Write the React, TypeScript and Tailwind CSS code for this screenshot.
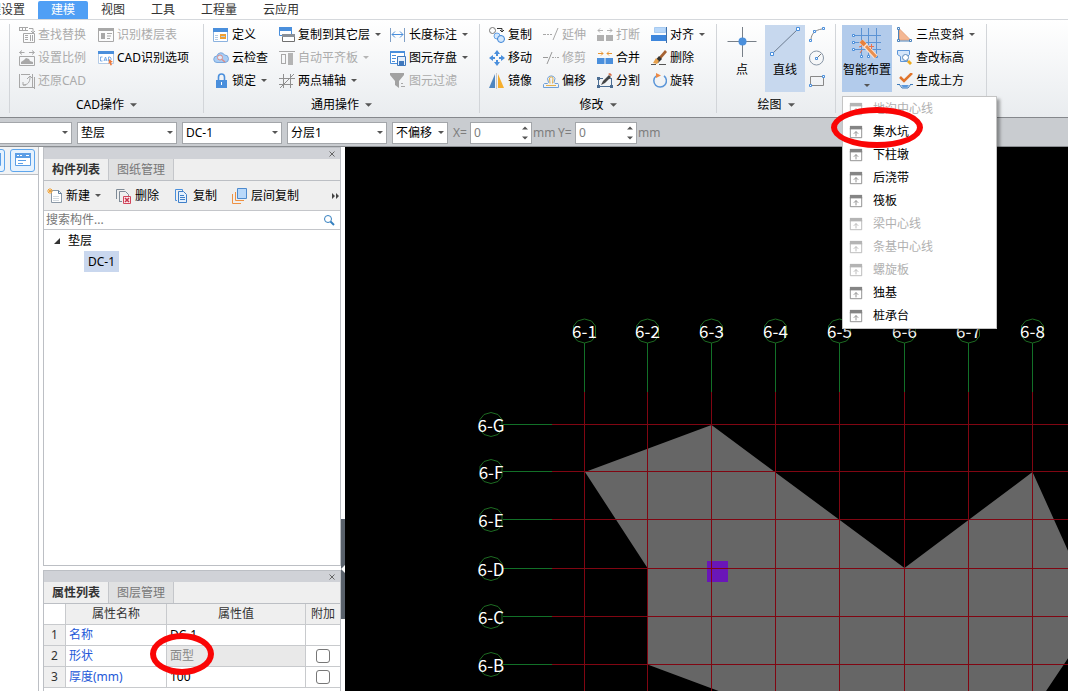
import clsx from 'clsx'
import React from 'react'

interface ChildrenProps {
  children?: React.ReactNode
  className?: string
}

function Svg({ children, className }: ChildrenProps) {
  return (
    <svg viewBox="0 0 16 16" fill="none" className={clsx('size-4 shrink-0', className)} aria-hidden>
      {children}
    </svg>
  )
}

const BLUE = '#4a8fdc'
const GRAY = '#a8a8a8'
const ORANGE = '#f0a030'

const icons = {
  findReplace: (
    <Svg>
      <path d="M0 .5h9M0 3.5h9M.5 0v4M3.5 0v4M6.5 0v4M10 1.5h4v4M12 4l2 2 2-2" stroke={GRAY} />
      <path d="M4.500 6.500h11v9h-11zM6 8.500h3M6 10.500h3M6 12.500h3M11.500 8v6M13.500 8v6" stroke={GRAY} />
    </Svg>
  ),
  floorTable: (
    <Svg>
      <path d="M.5 1.500h15v13H.5z" stroke={GRAY} />
      <path d="M0 1h16v3H0zM3 6h4v6H3z" fill={GRAY} />
      <path d="M9 6.500h5M9 9h4M9 11.500h3" stroke={GRAY} />
    </Svg>
  ),
  scale: (
    <Svg>
      <path d="M.5 2.500h5M3 .5l-2.500 2 2.500 2M10 2.500h5M13 .5l2.500 2-2.500 2M.5 6.500h15v9H.5z" stroke={GRAY} />
      <path d="M2 14v-2l3-2 2-2 3 1 1 2 3 1v2z" fill={GRAY} />
    </Svg>
  ),
  cadOptions: (
    <Svg>
      <path d="M.5 1.500h15v12H.5z" fill="#fff" stroke="#b4cbe6" />
      <path d="M0 1h16v3H0z" fill={BLUE} />
      <path d="M4.500 7H2.500v4h2M6 11l1.500-4L9 11M6.500 10h2M10.500 7v4h1.500l1-1V8l-1-1z" stroke="#5d9be2" strokeWidth=".8" />
      <path d="M11 9l4 3-2 .5 1 2.500-1.500.5-1-2.500-1 1z" fill="#ee7a3c" />
    </Svg>
  ),
  restore: (
    <Svg>
      <path d="M.5 1v14M0 14.500h16M15.500 4v12M2 1.500h9M13.500 1v13" stroke={GRAY} />
      <path d="M4 9v3h3M4 12c5 0 7-3 7-8M8 6l3-3 3 3" stroke={GRAY} />
    </Svg>
  ),
  define: (
    <Svg>
      <path d="M.5 1.500h14v13H.5z" fill="#fff" stroke="#8bb2df" />
      <path d="M0 1h15v4H0z" fill={BLUE} />
      <path d="M7 7h6v5H7z" fill={ORANGE} />
      <path d="M2 8.500h3M2 10.500h3M2 12.500h3M8 9.500h4" stroke="#b5cbe4" />
    </Svg>
  ),
  cloud: (
    <Svg>
      <path d="M4 12.500a3.200 3.200 0 010-6.500 4 4 0 017.500-1 3.500 3.500 0 01.5 7.500z" fill="#a9cdf4" stroke="#7aa7dd" />
      <circle cx="7" cy="7.500" r="2.500" fill="#dcebfb" stroke="#dc8a86" />
      <path d="M9 9.500l3 2.500" stroke="#dc8a86" strokeWidth="1.500" />
    </Svg>
  ),
  lock: (
    <Svg>
      <path d="M5.500 8V4a3 3 0 016 0v4" stroke={BLUE} strokeWidth="1.600" />
      <path d="M3 7h11v8H3z" fill={BLUE} />
      <path d="M8 9h1v3H8z" fill="#fff" />
    </Svg>
  ),
  copyFloors: (
    <Svg>
      <path d="M.5.5h12v8H.5z" fill="#fff" stroke={BLUE} />
      <path d="M0 0h13v4H0z" fill={BLUE} />
      <path d="M3.500 7.500h12v7h-12z" fill="#fff" stroke="#707070" />
      <path d="M3 7h13v3H3z" fill="#8a9097" />
    </Svg>
  ),
  alignSlab: (
    <Svg>
      <path d="M0 1.500h16M2.500 4v10M6.500 4v10M2 4.500h5M2 13.500h5" stroke={GRAY} />
      <path d="M9 3h5v12H9z" fill="#b4b4b4" />
    </Svg>
  ),
  twoPoint: (
    <Svg>
      <path d="M4.500 1v14M11.500 1v14M0 5.500h16M0 11.500h14M1 15L15 1" stroke="#909090" />
    </Svg>
  ),
  length: (
    <Svg>
      <path d="M.5 1v14M14.500 1v14" stroke="#7f9fc6" />
      <path d="M2 7.500h11M5 4.500l-3 3 3 3M10 4.500l3 3-3 3" stroke={BLUE} />
    </Svg>
  ),
  save: (
    <Svg>
      <path d="M.5 1.500h14v12H.5z" fill="#fff" stroke={BLUE} />
      <path d="M0 1h15v2H0z" fill={BLUE} />
      <path d="M2 5.500h4M2 8.500h4M2 11.500h3" stroke={BLUE} />
      <path d="M7.500 6.500h8v9h-8z" fill="#e6f0fc" stroke="#3f78bd" />
      <path d="M9 11h5v4H9z" fill="#3f78bd" />
    </Svg>
  ),
  filter: (
    <Svg>
      <path d="M0 0h14v2L9 8v7l-4-3V8L0 2z" fill="#a2a2a2" />
      <path d="M11 10.500h2M11 13.500h4" stroke={GRAY} />
    </Svg>
  ),
  copy: (
    <Svg>
      <circle cx="3.500" cy="3.500" r="3" stroke="#777" />
      <path d="M8 1.500h5v3M11 3l2 2 2-2" stroke="#333" />
      <circle cx="8" cy="9" r="3" stroke="#64a2e8" fill="#d3e7fc" />
      <circle cx="12" cy="12" r="3.500" stroke="#3b83d6" fill="#d3e7fc" />
    </Svg>
  ),
  move: (
    <Svg>
      <path d="M8 0l3 4H9v2H7V4H5zM8 16l3-4H9v-2H7v2H5zM0 8l4-3v2h2v2H4v2zM16 8l-4-3v2h-2v2h2v2z" fill={BLUE} />
    </Svg>
  ),
  mirror: (
    <Svg>
      <path d="M6 1v14H0z" fill="#4f86c0" />
      <path d="M9 1v14h6z" fill="#f6ae2d" />
      <path d="M7.500 0v16" stroke="#c8c8c8" />
    </Svg>
  ),
  extend: (
    <Svg>
      <path d="M0 7.500h3M4 7.500h2M7 7.500h2M10 13l5-12" stroke={GRAY} />
    </Svg>
  ),
  trim: (
    <Svg>
      <path d="M0 7.500h5M4 14L9 2" stroke="#999" />
      <path d="M9 7.500h2M12 7.500h1M14 7.500h2" stroke={GRAY} />
    </Svg>
  ),
  offset: (
    <Svg>
      <path d="M.5 14.500v-3l1-1h3l1-1-1-4a4 4 0 017.500 0l-1 4 1 1h3l.5 1v3z" stroke="#6e9fd6" />
      <path d="M3 12.500h10M7 10.500L6.500 5a2 2 0 013.500 0l-.5 5.500" stroke="#e5b04a" />
    </Svg>
  ),
  breakApart: (
    <Svg>
      <path d="M0 8h7v6H0zM9 8h7v6H9z" fill="#b0b0b0" />
      <path d="M1 3.500h5M3 1.500l-2 2 2 2M10 3.500h5M13 1.500l2 2-2 2" stroke="#b0b0b0" />
    </Svg>
  ),
  merge: (
    <Svg>
      <path d="M0 8h7.500v6H0zM8.500 8H16v6H8.500z" fill={BLUE} />
      <path d="M1 3.500h5M4 1.500l2 2-2 2M10 3.500h5M12 1.500l-2 2 2 2" stroke="#e79432" />
    </Svg>
  ),
  split: (
    <Svg>
      <path d="M1.500 5v8M1 5.500h5M10 5.500h5M14.500 5v8M1 13.500h14" stroke="#4b6d93" />
      <path d="M0 12h3v3H0zM13 12h3v3h-3zM0 4h3v3H0z" fill="#4b6d93" />
      <path d="M4 12l2-4 6-6 2 2-6 6z" fill="#444" />
      <path d="M11 1l2-1 2 2-1 1z" fill="#d56c45" />
    </Svg>
  ),
  align: (
    <Svg>
      <path d="M3.500.5h11v5h-11z" fill="#b7d7fa" stroke="#a7caf0" />
      <path d="M0 8h15v6H0z" fill="#3d86dc" />
      <path d="M15.500 0v16" stroke="#3f6fa8" />
    </Svg>
  ),
  erase: (
    <Svg>
      <path d="M14 0l2 2-6 7-2-2z" fill="#a56233" />
      <path d="M8 6l3 3-4 4-4-1z" fill="#333" />
      <path d="M5 8l3 3-2 3-4-1z" fill="#e8a24e" />
      <path d="M0 14.500h5M8 14.500h7" stroke="#555" />
    </Svg>
  ),
  rotate: (
    <Svg>
      <path d="M5 3a6.300 6.300 0 108-.2" stroke="#5a95d8" strokeWidth="1.500" />
      <path d="M5 0l5 2.500L5 5z" fill="#ec8a47" />
    </Svg>
  ),
  slope: (
    <Svg>
      <path d="M2.500 2v11h11z" fill="#f4b793" stroke="#e6a47c" />
      <path d="M1.500 2v12H14" stroke="#4a83bd" />
      <path d="M.5.5h2v2h-2zM.5 12.500h2v2h-2zM12.500 12.500h2v2h-2z" fill="#fff" stroke="#4a83bd" />
    </Svg>
  ),
  elevation: (
    <Svg>
      <path d="M.5.5h12v4l-2 2v5h-7v-5l-3-2z" fill="#d5e6fa" stroke="#5c95d8" />
      <circle cx="8.500" cy="7.500" r="3" fill="#fff" stroke="#5b88b8" />
      <path d="M12 10l3 3-2 2-3-3z" fill="#edaa1d" />
    </Svg>
  ),
  earthwork: (
    <Svg>
      <path d="M3 4l4 4 8-8" stroke="#e0742c" strokeWidth="2.500" />
      <path d="M0 11.500h3M13 11.500h3M2 11l3 4h6l3-4" stroke="#3e7ab8" />
      <path d="M4 12h8l-2 2.500H6z" fill="#5a98dc" />
    </Svg>
  ),
  arc: (
    <Svg>
      <path d="M2 13C2 7 6 3 13 2" stroke="#888" />
      <path d="M.5 12.500h2v2h-2zM13.500.5h2v2h-2zM4.500 3.500h2v2h-2z" fill="#fff" stroke={BLUE} />
    </Svg>
  ),
  circle: (
    <Svg>
      <circle cx="7.500" cy="8" r="7" stroke="#8795a5" />
      <path d="M8 8l4-4" stroke="#777" />
      <path d="M6.500 7.500h2v2h-2z" fill="#fff" stroke={BLUE} />
    </Svg>
  ),
  rect: (
    <Svg>
      <path d="M1.500 3.500h13v9h-13z" stroke="#888" />
      <path d="M.5 11.500h2v2h-2zM13.500 2.500h2v2h-2z" fill="#fff" stroke={BLUE} />
    </Svg>
  ),
  newItem: (
    <Svg>
      <path d="M4.500 2.500h7l3 3v9h-10z" fill="#fff" stroke="#8b98a6" />
      <path d="M11.500 2.500v3h3" stroke="#5d7f9f" />
      <path d="M6 8.500h6M6 10.500h6M6 12.500h6" stroke="#d3dae0" />
      <path d="M3 0v6M0 3h6M1 1l4 4M5 1L1 5" stroke="#f2a336" />
    </Svg>
  ),
  deleteItem: (
    <Svg>
      <path d="M.5 11V1.500h8M3.500 13.500v-10h6l3 3v2M3 13.500h3" stroke="#7f8b97" />
      <path d="M7.500 8.500h7v7h-7z" fill="#fbe9ec" stroke="#d2455b" />
      <path d="M9 10l4 4M13 10l-4 4" stroke="#c8324b" strokeWidth="1.500" />
    </Svg>
  ),
  copyItem: (
    <Svg>
      <path d="M3 12.500H1.500v-11h7V3" stroke="#4a8fdc" />
      <path d="M4.500 3.500h5l3 3v8h-8z" fill="#e4f0fd" stroke="#3f7fc8" />
      <path d="M6 7.500h4M6 9.500h5M6 11.500h5" stroke="#3f7fc8" />
    </Svg>
  ),
  layerCopy: (
    <Svg>
      <path d="M5.500.5h9v10h-9z" fill="#b8d8fa" stroke="#4d8ace" />
      <path d="M3.500 4v8.500H12M.5 6v9.500H9" stroke="#ee9143" />
    </Svg>
  ),
  place: (
    <Svg className="size-[14px]">
      <path d="M1.500 3.500h13v11h-13z" fill="#fff" stroke="currentColor" />
      <path d="M1 1h14v4H1z" fill="currentColor" />
      <path d="M8 13V7.500M5.500 10L8 7.500l2.500 2.500" stroke="currentColor" />
    </Svg>
  ),
}

type IconName = keyof typeof icons

function Caret({ big }: { big?: boolean }) {
  return (
    <svg viewBox="0 0 8 4" className={big ? 'h-1 w-[7px] shrink-0' : 'h-[3px] w-[6px] shrink-0'} aria-hidden>
      <path d="M0 0h8L4 4z" fill="currentColor" />
    </svg>
  )
}

interface ToolProps {
  icon: IconName
  label: string
  caret?: boolean
  disabled?: boolean
}

function Tool({ icon, label, caret, disabled }: ToolProps) {
  return (
    <button
      type="button"
      disabled={disabled}
      className={clsx('flex h-[23px] items-center gap-[3px] whitespace-nowrap', disabled ? 'text-[#ababab]' : 'text-black')}
    >
      {icons[icon]}
      {label}
      {caret && (
        <span className={clsx('pl-[2px]', disabled ? 'text-[#b5b5b5]' : 'text-[#555]')}>
          <Caret />
        </span>
      )}
    </button>
  )
}

function Group({ title, className, children }: ChildrenProps & { title?: string }) {
  return (
    <section className={clsx('relative flex shrink-0 flex-col pt-[3px]', className)}>
      <div className="h-[70px]">{children}</div>
      {title && (
        <button type="button" className="flex h-[23px] items-center justify-center gap-[6px] pr-px text-black">
          {title}
          <span className="text-[#555]">
            <Caret big />
          </span>
        </button>
      )}
      <span className="absolute inset-y-1 right-0 w-px bg-[#d2d5d9]" />
    </section>
  )
}

const tabs = ['工程设置', '建模', '视图', '工具', '工程量', '云应用']

function TabBar() {
  return (
    <nav className="flex h-[19px] bg-white pt-px text-[#333]">
      {tabs.map((tab, i) => (
        <button
          key={tab}
          type="button"
          className={clsx(
            'flex shrink-0 items-center px-[13px]',
            i === 0 && '-ml-9',
            tab === '建模' && 'rounded-t-xs bg-[#509ff5] text-white',
          )}
        >
          {tab}
        </button>
      ))}
    </nav>
  )
}

interface MenuItem {
  label: string
  disabled?: boolean
  marked?: boolean
}

const menuItems: MenuItem[] = [
  { label: '地沟中心线', disabled: true },
  { label: '集水坑', marked: true },
  { label: '下柱墩' },
  { label: '后浇带' },
  { label: '筏板' },
  { label: '梁中心线', disabled: true },
  { label: '条基中心线', disabled: true },
  { label: '螺旋板', disabled: true },
  { label: '独基' },
  { label: '桩承台' },
]

function PlaceMenu() {
  return (
    <ul className="absolute top-[71px] left-0 z-20 w-[155px] border border-[#c4c4c4] bg-white pb-px shadow-[3px_3px_3px_rgba(0,0,0,0.35)]">
      {menuItems.map(({ label, disabled, marked }) => (
        <li key={label} className="relative">
          <button
            type="button"
            disabled={disabled}
            className={clsx('flex h-[23px] w-full items-center gap-[10px] pl-[6px]', disabled ? 'text-[#b0b0b0]' : 'text-black')}
          >
            <span className={disabled ? 'text-[#b4b4b4]' : 'text-[#858585]'}>{icons.place}</span>
            {label}
          </button>
          {marked && (
            <span className="pointer-events-none absolute -top-[13px] -left-3 z-10 h-[41px] w-[92px] rounded-[50%] border-[6px] border-[#fa0505]" />
          )}
        </li>
      ))}
    </ul>
  )
}

function Ribbon() {
  return (
    <div className="flex h-[99px] border-t border-b border-t-[#d5d8dc] border-b-[#85888c] bg-linear-to-b from-white to-[#e9ecef]">
      <Group className="w-[10px]" />
      <Group title="CAD操作" className="w-[194px]">
        <div className="grid grid-cols-[79px_auto] pl-[9px]">
          <Tool icon="findReplace" label="查找替换" disabled />
          <Tool icon="floorTable" label="识别楼层表" disabled />
          <Tool icon="scale" label="设置比例" disabled />
          <Tool icon="cadOptions" label="CAD识别选项" />
          <Tool icon="restore" label="还原CAD" disabled />
        </div>
      </Group>
      <Group title="通用操作" className="w-[276px]">
        <div className="grid grid-cols-[66px_111px_auto] pl-[9px]">
          <Tool icon="define" label="定义" />
          <Tool icon="copyFloors" label="复制到其它层" caret />
          <Tool icon="length" label="长度标注" caret />
          <Tool icon="cloud" label="云检查" />
          <Tool icon="alignSlab" label="自动平齐板" caret disabled />
          <Tool icon="save" label="图元存盘" caret />
          <Tool icon="lock" label="锁定" caret />
          <Tool icon="twoPoint" label="两点辅轴" caret />
          <Tool icon="filter" label="图元过滤" disabled />
        </div>
      </Group>
      <Group title="修改" className="w-[237px]">
        <div className="grid grid-cols-[54px_54px_54px_auto] pl-[9px]">
          <Tool icon="copy" label="复制" />
          <Tool icon="extend" label="延伸" disabled />
          <Tool icon="breakApart" label="打断" disabled />
          <Tool icon="align" label="对齐" caret />
          <Tool icon="move" label="移动" />
          <Tool icon="trim" label="修剪" disabled />
          <Tool icon="merge" label="合并" />
          <Tool icon="erase" label="删除" />
          <Tool icon="mirror" label="镜像" />
          <Tool icon="offset" label="偏移" />
          <Tool icon="split" label="分割" />
          <Tool icon="rotate" label="旋转" />
        </div>
      </Group>
      <Group title="绘图" className="w-[119px]">
        <div className="flex gap-[3px] pl-[5px]">
          <button type="button" className="mt-[2px] flex h-[67px] w-10 flex-col items-center pt-[2px] text-black">
            <svg viewBox="0 0 30 30" className="size-[30px]" fill="none" aria-hidden>
              <path d="M.5 14.500h29M15.500 0v30" stroke="#777f88" />
              <circle cx="15.500" cy="14.500" r="4" fill={BLUE} />
            </svg>
            <span className="mt-1 leading-[18px]">点</span>
          </button>
          <button type="button" className="mt-[2px] flex h-[67px] w-10 flex-col items-center bg-[#c7d8ee] pt-[2px] text-black">
            <svg viewBox="0 0 30 30" className="size-[30px]" fill="none" aria-hidden>
              <path d="M2 27L28 2" stroke="#6c7c90" />
              <path d="M.5 25.500h3v3h-3zM26.500.5h3v3h-3z" fill="#fff" stroke={BLUE} />
            </svg>
            <span className="mt-1 leading-[18px]">直线</span>
          </button>
          <div className="flex flex-col pl-px">
            {(['arc', 'circle', 'rect'] as const).map(name => (
              <button key={name} type="button" aria-label={name} className="flex h-[23px] items-center">
                {icons[name]}
              </button>
            ))}
          </div>
        </div>
      </Group>
      <Group className="w-[151px]">
        <div className="flex gap-[5px] pl-[6px]">
          <div className="relative mt-[2px]">
            <button type="button" className="flex h-[67px] w-[50px] flex-col items-center bg-[#b2cbeb] pt-[2px] whitespace-nowrap text-black">
              <svg viewBox="0 0 30 32" className="h-8 w-[30px]" fill="none" aria-hidden>
                <path d="M9.500 1v27M16.500 1v27M24.500 1v27M3 8.500h26M3 15.500h26M3 22.500h26" stroke="#5c93d4" />
                <path d="M.5 7.500h2v2h-2zM.5 14.500h2v2h-2zM.5 21.500h2v2h-2zM8.500 28.500h2v2h-2zM15.500 28.500h2v2h-2zM23.500 28.500h2v2h-2z" fill="#fff" stroke={BLUE} />
                <path d="M9 14l15 16" stroke="#fbe3d3" strokeWidth="5" />
                <path d="M9 14l4 4" stroke="#e8813c" strokeWidth="4" />
                <path d="M14 19l10 11" stroke="#ea8f4d" strokeWidth="3" />
                <path d="M19.500 17v5M17 19.500h5M7 20l3-1M10 23l-2 3" stroke="#e9704c" />
              </svg>
              <span className="mt-[2px] leading-[18px]">智能布置</span>
              <span className="mt-[5px] flex text-[#555]">
                <Caret />
              </span>
            </button>
            <PlaceMenu />
          </div>
          <div>
            <Tool icon="slope" label="三点变斜" caret />
            <Tool icon="elevation" label="查改标高" />
            <Tool icon="earthwork" label="生成土方" />
          </div>
        </div>
      </Group>
    </div>
  )
}

function Combo({ label, value, className }: { label: string, value: string, className: string }) {
  return (
    <div className={clsx('relative shrink-0', className)}>
      <select aria-label={label} defaultValue={value} className="block h-[22px] w-full appearance-none border border-[#a3a6aa] bg-white pl-[3px] text-black">
        <option>{value}</option>
      </select>
      <span className="pointer-events-none absolute inset-y-0 right-1 flex items-center text-[#555]">
        <Caret />
      </span>
    </div>
  )
}

function Spinner({ label }: { label: string }) {
  return (
    <label className="flex shrink-0 items-center">
      <span className="w-[17px]">{label}</span>
      <span className="relative">
        <input defaultValue="0" className="block h-[22px] w-[62px] border border-[#a3a6aa] bg-white pl-[3px]" />
        <svg viewBox="0 0 6 14" className="absolute top-1 right-1 h-[14px] w-[6px]" fill="#555" aria-hidden>
          <path d="M0 3.500L3 .5l3 3zM0 10.500l3 3 3-3z" />
        </svg>
      </span>
      <span className="w-[23px] pl-px">mm</span>
    </label>
  )
}

function OptionBar() {
  return (
    <div className="flex h-[29px] items-center gap-[5px] border-b border-[#8b8e92] bg-[#c9ccd0] pt-px text-[#7d7d7d]">
      <Combo label="楼层" value="" className="-ml-1 w-[76px]" />
      <Combo label="构件类型" value="垫层" className="w-[100px]" />
      <Combo label="构件" value="DC-1" className="w-[100px]" />
      <Combo label="分层" value="分层1" className="w-[100px]" />
      <Combo label="偏移" value="不偏移" className="w-14" />
      <div className="flex gap-[3px]">
        <Spinner label="X=" />
        <Spinner label="Y=" />
      </div>
    </div>
  )
}

function PanelHeader({ active, other }: { active: string, other: string }) {
  return (
    <>
      <div className="flex h-[11px] shrink-0 items-center justify-end bg-[#d0d2d7] pr-[5px]">
        <button type="button" aria-label="关闭">
          <svg viewBox="0 0 6 6" className="size-[6px]" aria-hidden>
            <path d="M.5.5l5 5M5.500.5l-5 5" stroke="#666" />
          </svg>
        </button>
      </div>
      <div className="flex h-[22px] shrink-0 border-b border-[#bcbfc4] bg-[#efefef]">
        <button type="button" className="w-[65px] border-r border-[#c4c6ca] font-bold text-[#333]">{active}</button>
        <button type="button" className="w-[65px] border-r border-[#c4c6ca] bg-[#e0e1e2] text-[#777]">{other}</button>
      </div>
    </>
  )
}

function ComponentPanel() {
  return (
    <section className="flex min-h-0 flex-1 flex-col border border-[#bcbfc4] bg-white">
      <PanelHeader active="构件列表" other="图纸管理" />
      <div className="flex h-[30px] shrink-0 items-center gap-[15px] border-b border-[#c4c6ca] bg-[#efefef] pl-[3px]">
        <Tool icon="newItem" label="新建" caret />
        <Tool icon="deleteItem" label="删除" />
        <Tool icon="copyItem" label="复制" />
        <Tool icon="layerCopy" label="层间复制" />
        <button type="button" aria-label="更多" className="ml-auto">
          <svg viewBox="0 0 8 6" className="h-[6px] w-2" fill="#444" aria-hidden>
            <path d="M0 0l3 3-3 3zM4 0l3 3-3 3z" />
          </svg>
        </button>
      </div>
      <div className="flex h-[19px] shrink-0 items-center border-b border-[#c4c6ca] pr-[5px]">
        <input aria-label="搜索构件" placeholder="搜索构件..." className="min-w-0 flex-1 pl-[2px] outline-none placeholder:text-[#777]" />
        <svg viewBox="0 0 12 12" className="size-3" fill="none" stroke="#3580c0" aria-hidden>
          <circle cx="5" cy="5" r="3.500" />
          <path d="M7.500 7.500L11 11" strokeWidth="2" />
        </svg>
      </div>
      <ul className="text-black">
        <li>
          <div className="flex h-[21px] items-center gap-2 pl-[10px]">
            <svg viewBox="0 0 6 6" className="size-[6px]" fill="#333" aria-hidden>
              <path d="M6 0v6H0z" />
            </svg>
            垫层
          </div>
          <ul className="pl-10">
            <li className="w-fit bg-[#c9d7ee] px-1 leading-[21px]">DC-1</li>
          </ul>
        </li>
      </ul>
    </section>
  )
}

const properties = [
  { name: '名称', value: 'DC-1' },
  { name: '形状', value: '面型', locked: true, extra: true },
  { name: '厚度(mm)', value: '100', extra: true },
]

function PropertyPanel() {
  return (
    <section className="h-[121px] shrink-0 overflow-hidden border border-b-0 border-[#bcbfc4] bg-white">
      <PanelHeader active="属性列表" other="图层管理" />
      <table className="w-full table-fixed border-separate border-spacing-0 text-[#333] [&_td]:border-r [&_td]:border-b [&_td]:border-[#c8cacd] [&_td]:p-0 [&_td:last-child]:border-r-0 [&_th]:border-r [&_th]:border-b [&_th]:border-[#c8cacd] [&_th]:p-0 [&_th]:font-normal [&_th:last-child]:border-r-0">
        <colgroup>
          <col className="w-[22px]" />
          <col className="w-[101px]" />
          <col />
          <col className="w-[34px]" />
        </colgroup>
        <thead>
          <tr className="h-[21px] bg-[#efefef]">
            <th className="bg-white" />
            <th>属性名称</th>
            <th>属性值</th>
            <th>附加</th>
          </tr>
        </thead>
        <tbody>
          {properties.map((p, i) => (
            <tr key={p.name} className="h-[21px]">
              <td className="bg-[#efefef] text-center">{i + 1}</td>
              <td><span className="pl-[3px] text-[#2458d8]">{p.name}</span></td>
              <td className={p.locked ? 'bg-[#e9e9e9] text-[#888]' : 'text-black'}>
                <div className="relative pl-[3px]">
                  {p.value}
                  {p.locked && (
                    <span className="pointer-events-none absolute -top-[15px] -left-[17px] z-10 h-[42px] w-16 rounded-[50%] border-[6px] border-[#fa0505]" />
                  )}
                </div>
              </td>
              <td>
                {p.extra && (
                  <input
                    type="checkbox"
                    aria-label={`附加 ${p.name}`}
                    className="mx-auto block size-[14px] appearance-none rounded-[3px] border border-[#777] bg-white"
                  />
                )}
              </td>
            </tr>
          ))}
        </tbody>
      </table>
    </section>
  )
}

function SideStrip() {
  return (
    <aside className="w-[39px] shrink-0 overflow-hidden border-r border-[#bcbfc4] bg-white">
      <div className="flex h-7 items-center justify-end gap-[5px] border-b border-[#bcbfc4] bg-[#f1f3f5] pr-[3px] pb-px">
        {['视图', '列表'].map(name => (
          <button
            key={name}
            type="button"
            aria-label={name}
            className="flex h-[23px] w-[25px] shrink-0 items-center justify-center rounded-[3px] border border-[#5fa6ec] bg-[#e6f2fe]"
          >
            <Svg>
              <path d="M.5 1.500h15v12H.5z" stroke="#5b9ee6" fill="#fff" />
              <path d="M0 1h16v5H0z" fill="#5b9ee6" />
              <path d="M2 3.500h2M5 3.500h2M11 3.500h3" stroke="#fff" />
              <path d="M3 8.500h8M3 11.500h5" stroke="#5b9ee6" />
            </Svg>
          </button>
        ))}
      </div>
    </aside>
  )
}

const columns = [239.5, 302.5, 366.5, 430.5, 494.5, 559.5, 623.5, 687.5]
const rows = [
  { name: 'G', y: 277.5 },
  { name: 'F', y: 324.5 },
  { name: 'E', y: 372.5 },
  { name: 'D', y: 421.5 },
  { name: 'C', y: 469.5 },
  { name: 'B', y: 517.5 },
]

function AxisBubble({ x, y, label }: { x: number, y: number, label: string }) {
  return (
    <g transform={`translate(${x} ${y})`}>
      <path d="M0-12L7-10L11-5V5L7 10L0 12L-7 10L-11 5V-5L-7-10z" fill="none" stroke="#1d6b22" />
      <text y="7" textAnchor="middle" fontSize="17" fill="#fff">{label}</text>
    </g>
  )
}

function Drawing() {
  return (
    <main className="min-w-0 flex-1 overflow-hidden bg-black">
      <svg className="block h-full w-full font-['Noto_Sans_CJK_SC',sans-serif]" aria-label="轴网">
        <path d="M240 325L366.500 278L559.500 421L687.500 325L752 468L687 565H430L302.500 517.500V421z" fill="#666" />
        <path d="M362 414h21v21h-21z" fill="#6a16b8" />
        {columns.map((x, i) => (
          <g key={x}>
            <path d={`M${x} 196V245`} stroke="#127028" />
            <path d={`M${x} 245V2000`} stroke="#800612" />
            <AxisBubble x={x} y={184} label={`6-${i + 1}`} />
          </g>
        ))}
        {rows.map(({ name, y }) => (
          <g key={name}>
            <path d={`M158 ${y}H207`} stroke="#127028" />
            <path d={`M207 ${y}H4000`} stroke="#800612" />
            <AxisBubble x={146} y={y} label={`6-${name}`} />
          </g>
        ))}
      </svg>
    </main>
  )
}

export default function App() {
  return (
    <div className="flex h-screen flex-col overflow-hidden bg-white font-['Noto_Sans','Noto_Sans_CJK_SC',sans-serif] text-xs">
      <TabBar />
      <Ribbon />
      <OptionBar />
      <div className="flex min-h-0 flex-1">
        <SideStrip />
        <div className="ml-1 flex w-[298px] shrink-0 flex-col gap-1">
          <ComponentPanel />
          <PropertyPanel />
        </div>
        <div className="flex w-1 shrink-0 flex-col justify-end pb-[72px]">
          <button type="button" aria-label="折叠" className="flex h-[100px] items-center bg-[#59616b]">
            <svg viewBox="0 0 4 8" className="h-2 w-1" fill="#fff" aria-hidden>
              <path d="M4 0v8L0 4z" />
            </svg>
          </button>
        </div>
        <Drawing />
      </div>
    </div>
  )
}
